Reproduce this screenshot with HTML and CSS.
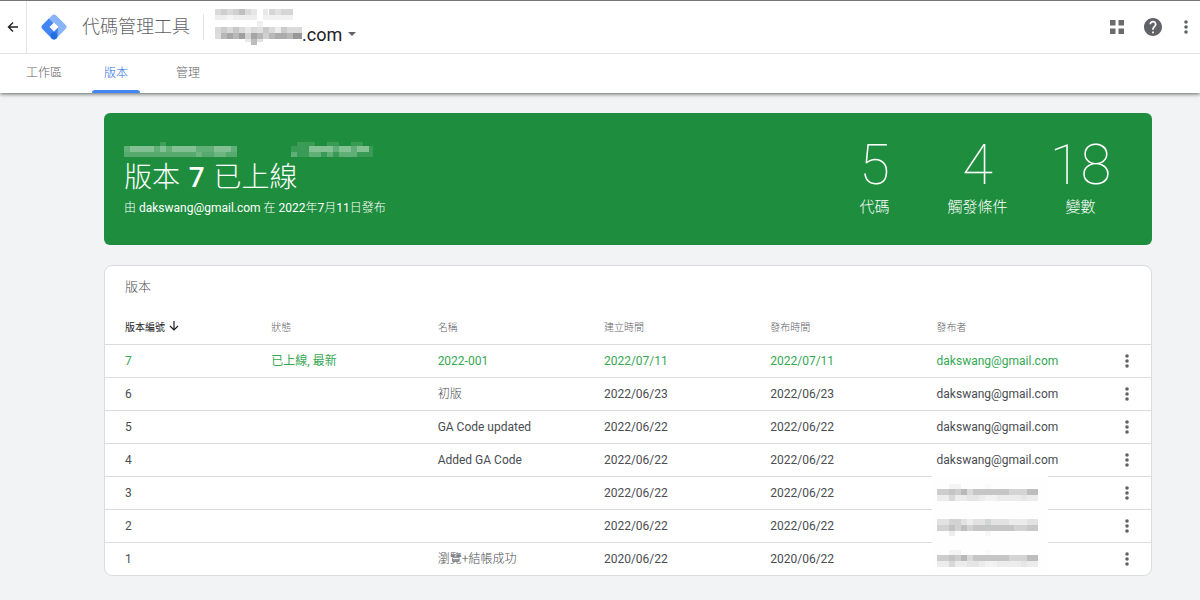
FILE: index.html
```
<!DOCTYPE html>
<html lang="zh-Hant">
<head>
    <meta charset="UTF-8">
    <meta name="viewport" content="width=device-width, initial-scale=1.0">
    <title>代碼管理工具</title>
    <link rel="stylesheet" href="styles.css">
</head>
<body>
    <!-- shared shapes -->
    <svg class="sprite" aria-hidden="true">
        <symbol id="dots" viewBox="0 0 4 14">
            <circle cx="2" cy="2" r="1.8"/><circle cx="2" cy="7" r="1.8"/><circle cx="2" cy="12" r="1.8"/>
        </symbol>
        <symbol id="masked" viewBox="0 0 116 32" overflow="visible">
            <rect x="0" y="-1" width="116" height="35" fill="#fefefe"/>
            <rect x="17" y="7" width="12" height="5" fill="#f4f4f4"/><rect x="53" y="7" width="6" height="5" fill="#fafafa"/>
            <rect x="5" y="12" width="101" height="6" fill="#cdcdcd"/>
            <rect x="17" y="12" width="6" height="6" fill="#c4c4c4"/><rect x="29" y="12" width="6" height="6" fill="#b9b9b9"/>
            <rect x="35" y="12" width="6" height="6" fill="#d9d9d9"/><rect x="41" y="12" width="36" height="6" fill="#c6c6c6"/>
            <rect x="77" y="12" width="18" height="6" fill="#d4d4d4"/><rect x="95" y="12" width="11" height="6" fill="#bdbdbd"/>
            <rect x="5" y="18" width="101" height="6" fill="#ececec"/>
            <rect x="17" y="18" width="6" height="6" fill="#d8d8d8"/><rect x="35" y="18" width="12" height="6" fill="#e5e5e5"/>
            <rect x="53" y="18" width="12" height="6" fill="#f2f2f2"/><rect x="89" y="18" width="6" height="6" fill="#e6e6e6"/>
        </symbol>
        <symbol id="masked-low" viewBox="0 0 116 32" overflow="visible">
            <rect x="0" y="-1" width="116" height="35" fill="#fefefe"/>
            <rect x="5" y="9" width="101" height="6" fill="#e2e2e2"/>
            <rect x="17" y="9" width="12" height="6" fill="#d2d2d2"/><rect x="35" y="9" width="6" height="6" fill="#ededed"/>
            <rect x="53" y="9" width="6" height="6" fill="#d0d6d4"/><rect x="77" y="9" width="18" height="6" fill="#ebebeb"/>
            <rect x="5" y="15" width="101" height="6" fill="#d2d2d2"/>
            <rect x="17" y="15" width="6" height="6" fill="#c2c2c2"/><rect x="29" y="15" width="6" height="6" fill="#bfbfbf"/>
            <rect x="41" y="15" width="41" height="6" fill="#c6c6c6"/><rect x="95" y="15" width="11" height="6" fill="#c8c8c8"/>
            <rect x="17" y="21" width="6" height="5" fill="#ededed"/><rect x="53" y="21" width="6" height="5" fill="#f7f7f7"/>
        </symbol>
    </svg>

    <header class="header">
        <div class="topbar">
            <button class="icon-btn back" aria-label="返回">
                <svg width="12" height="12" viewBox="0 0 12 12" fill="none" stroke="#202124" stroke-width="1.4"><path d="M11 6H2M6 1.500L1.500 6 6 10.500"/></svg>
            </button>
            <svg class="logo" width="26" height="26" viewBox="0 0 26 26" aria-hidden="true">
                <path d="M10.800 1.600a3 3 0 0 1 4.400 0l9.200 9.200a3 3 0 0 1 0 4.400l-9.200 9.200a3 3 0 0 1-4.400 0L17 13 7.500 5z" fill="#8ab4f8"/>
                <path d="M7.800 4.600L17 13.800v3.700l-1.500 6.600a3 3 0 0 1-4.700.3l-9.200-9.200a3 3 0 0 1 0-4.400z" fill="#4285f4"/>
                <path d="M13 8.500l4.500 4.500-4.500 4.500L8.500 13z" fill="#fff"/>
                <circle cx="13" cy="21.700" r="3.500" fill="#246fdb"/>
            </svg>
            <h1 class="product">代碼管理工具</h1>
            <button class="account">
                <svg width="87" height="38" viewBox="0 0 87 38" shape-rendering="crispEdges" aria-hidden="true">
                    <rect x="0" y="1" width="42" height="6" fill="#dadada"/><rect x="6" y="1" width="6" height="6" fill="#cfcfcf"/>
                    <rect x="18" y="1" width="6" height="6" fill="#d0d0d0"/><rect x="24" y="1" width="6" height="6" fill="#bfbfbf"/>
                    <rect x="36" y="1" width="6" height="6" fill="#e6e6e6"/><rect x="48" y="1" width="5" height="6" fill="#e8e8e8"/>
                    <rect x="54" y="1" width="24" height="6" fill="#d6d6d6"/><rect x="60" y="1" width="6" height="6" fill="#e1e1e1"/>
                    <rect x="0" y="7" width="42" height="5" fill="#eee"/><rect x="12" y="7" width="6" height="5" fill="#f5f5f5"/>
                    <rect x="48" y="7" width="30" height="5" fill="#f1f1f1"/><rect x="42" y="13" width="6" height="6" fill="#f0f0f0"/>
                    <rect x="0" y="19" width="87" height="6" fill="#dadada"/><rect x="6" y="19" width="6" height="6" fill="#ccc"/>
                    <rect x="18" y="19" width="6" height="6" fill="#c8c8c8"/><rect x="30" y="19" width="6" height="6" fill="#e8e8e8"/>
                    <rect x="42" y="19" width="6" height="6" fill="#e0e0e0"/><rect x="48" y="19" width="6" height="6" fill="#c9c9c9"/>
                    <rect x="60" y="19" width="6" height="6" fill="#ededed"/><rect x="66" y="19" width="6" height="6" fill="#cbcbcb"/>
                    <rect x="0" y="25" width="87" height="6" fill="#b8b8b8"/><rect x="0" y="25" width="6" height="6" fill="#ddd"/>
                    <rect x="12" y="25" width="6" height="6" fill="#a7a7a7"/><rect x="24" y="25" width="6" height="6" fill="#9f9f9f"/>
                    <rect x="30" y="25" width="6" height="6" fill="#d2d2d2"/><rect x="36" y="25" width="6" height="6" fill="#a5a5a5"/>
                    <rect x="48" y="25" width="6" height="6" fill="#d0d0d0"/><rect x="60" y="25" width="12" height="6" fill="#acacac"/>
                    <rect x="78" y="25" width="9" height="6" fill="#989898"/><rect x="36" y="31" width="6" height="6" fill="#bcbcbc"/>
                    <rect x="30" y="31" width="6" height="3" fill="#e8e8e8"/><rect x="42" y="31" width="6" height="3" fill="#e2e2e2"/>
                </svg>
                <span class="domain">.com</span>
                <svg class="caret" width="8" height="4" viewBox="0 0 8 4" aria-hidden="true"><path d="M0 0h8L4 4z" fill="#5f6368"/></svg>
            </button>
            <div class="actions">
                <button class="icon-btn" aria-label="應用程式">
                    <svg width="14" height="14" viewBox="0 0 14 14" fill="#6b6b6b"><path d="M0 0h5.500v5.500H0zM8.500 0H14v5.500H8.500zM0 8.500h5.500V14H0zM8.500 8.500H14V14H8.500z"/></svg>
                </button>
                <button class="icon-btn" aria-label="說明">
                    <svg width="18" height="18" viewBox="2 2 20 20" fill="#5f6368"><path d="M12 2C6.480 2 2 6.480 2 12s4.480 10 10 10 10-4.480 10-10S17.520 2 12 2zm1 17h-2v-2h2v2zm2.070-7.750l-.9.920C13.450 12.900 13 13.500 13 15h-2v-.5c0-1.100.45-2.100 1.170-2.830l1.240-1.260c.37-.36.59-.86.59-1.410 0-1.100-.9-2-2-2s-2 .9-2 2H8c0-2.210 1.790-4 4-4s4 1.790 4 4c0 .88-.36 1.680-.93 2.250z"/></svg>
                </button>
                <button class="icon-btn" aria-label="更多"><svg width="4" height="14"><use href="#dots"/></svg></button>
            </div>
        </div>
        <nav class="tabs">
            <a href="#workspace">工作區</a>
            <a href="#versions" class="active">版本</a>
            <a href="#admin">管理</a>
        </nav>
    </header>

    <main class="content">
        <section class="live">
            <div class="live-info">
                <svg width="250" height="17" viewBox="0 0 250 17" fill="#fff" shape-rendering="crispEdges" aria-hidden="true">
                    <path d="M0 5h113v6H0zM12 5h18v6H12zM54 5h18v6H54zM90 5h18v6H90z" fill-opacity=".3"/>
                    <path d="M6 5h24v6H6zM36 5h6v6h-6zM48 5h24v6H48zM90 5h17v6H90z" fill-opacity=".22"/>
                    <path d="M0 11h113v5H0zM24 11h12v5H24zM72 11h6v5h-6z" fill-opacity=".25"/>
                    <path d="M36 1h6v4h-6zM72 11h6v5h-6zM90 11h12v5H90z" fill-opacity=".14"/>
                    <path d="M167 5h82v6h-82zM173 1h18v4h-18zM203 1h12v4h-12zM227 1h12v4h-12z" fill-opacity=".12"/>
                    <path d="M185 5h24v6h-24zM215 5h12v6h-12zM233 5h12v6h-12z" fill-opacity=".38"/>
                    <path d="M209 5h6v6h-6zM227 5h6v6h-6zM167 11h6v5h-6zM185 11h12v5h-12zM203 11h6v5h-6zM215 11h18v5h-18z" fill-opacity=".2"/>
                    <path d="M167 11h82v5h-82z" fill-opacity=".12"/>
                </svg>
                <h2>版本 <b>7</b> 已上線</h2>
                <p>由 <b>dakswang@gmail.com</b> 在 <b>2022</b>年<b>7</b>月<b>11</b>日發布</p>
            </div>
            <dl class="stats">
                <div><dd>5</dd><dt>代碼</dt></div>
                <div><dd>4</dd><dt>觸發條件</dt></div>
                <div><dd>18</dd><dt>變數</dt></div>
            </dl>
        </section>

        <section class="versions" id="versions">
            <h3>版本</h3>
            <table>
                <thead>
                    <tr>
                        <th class="sorted">版本編號 <svg width="10" height="10" viewBox="0 0 10 10" fill="none" stroke="#202124" stroke-width="1.2" aria-hidden="true"><path d="M5 0v9M1 5l4 4 4-4"/></svg></th>
                        <th>狀態</th>
                        <th>名稱</th>
                        <th>建立時間</th>
                        <th>發布時間</th>
                        <th>發布者</th>
                        <th class="menu"></th>
                    </tr>
                </thead>
                <tbody>
                    <tr class="current">
                        <td>7</td><td>已上線, 最新</td><td>2022-001</td><td>2022/07/11</td><td>2022/07/11</td><td>dakswang@gmail.com</td>
                        <td class="menu"><button class="icon-btn" aria-label="更多"><svg width="4" height="14"><use href="#dots"/></svg></button></td>
                    </tr>
                    <tr>
                        <td>6</td><td></td><td class="zh">初版</td><td>2022/06/23</td><td>2022/06/23</td><td>dakswang@gmail.com</td>
                        <td class="menu"><button class="icon-btn" aria-label="更多"><svg width="4" height="14"><use href="#dots"/></svg></button></td>
                    </tr>
                    <tr>
                        <td>5</td><td></td><td>GA Code updated</td><td>2022/06/22</td><td>2022/06/22</td><td>dakswang@gmail.com</td>
                        <td class="menu"><button class="icon-btn" aria-label="更多"><svg width="4" height="14"><use href="#dots"/></svg></button></td>
                    </tr>
                    <tr>
                        <td>4</td><td></td><td>Added GA Code</td><td>2022/06/22</td><td>2022/06/22</td><td>dakswang@gmail.com</td>
                        <td class="menu"><button class="icon-btn" aria-label="更多"><svg width="4" height="14"><use href="#dots"/></svg></button></td>
                    </tr>
                    <tr>
                        <td>3</td><td></td><td></td><td>2022/06/22</td><td>2022/06/22</td><td><svg class="masked" width="116" height="32"><use href="#masked"/></svg></td>
                        <td class="menu"><button class="icon-btn" aria-label="更多"><svg width="4" height="14"><use href="#dots"/></svg></button></td>
                    </tr>
                    <tr>
                        <td>2</td><td></td><td></td><td>2022/06/22</td><td>2022/06/22</td><td><svg class="masked" width="116" height="32"><use href="#masked-low"/></svg></td>
                        <td class="menu"><button class="icon-btn" aria-label="更多"><svg width="4" height="14"><use href="#dots"/></svg></button></td>
                    </tr>
                    <tr>
                        <td>1</td><td></td><td class="zh">瀏覽+結帳成功</td><td>2020/06/22</td><td>2020/06/22</td><td><svg class="masked last" width="116" height="32"><use href="#masked"/></svg></td>
                        <td class="menu"><button class="icon-btn" aria-label="更多"><svg width="4" height="14"><use href="#dots"/></svg></button></td>
                    </tr>
                </tbody>
            </table>
        </section>
    </main>
</body>
</html>
```
FILE: styles.css
```
* {
    box-sizing: border-box;
}
body {
    margin: 0;
    font-family: Roboto, "Noto Sans CJK TC", sans-serif;
    font-size: 12px;
    color: #4a4d51;
    background: #f1f3f4;
}
h1, h2, h3, p, dl, dd {
    margin: 0;
    font-weight: 300;
}
button {
    font: inherit;
    color: inherit;
    background: none;
    border: none;
    padding: 0;
    cursor: pointer;
}
.sprite {
    position: absolute;
    width: 0;
    height: 0;
}
.icon-btn {
    display: inline-flex;
    align-items: center;
    justify-content: center;
    fill: #5f6368;
}

/* header */
.header {
    background: #fff;
    border-top: 1px solid #77777b;
    box-shadow: 0 1px 4px rgba(0, 0, 0, 0.6);
}
.topbar {
    display: flex;
    align-items: center;
    height: 53px;
    border-bottom: 1px solid #e4e5e7;
}
.back {
    width: 27px;
    height: 100%;
    border-right: 1px solid #e4e5e7;
}
.logo {
    margin: 0 15px 0 14px;
}
.product {
    font-size: 18px;
    line-height: 26px;
    color: #5f6368;
    padding-right: 13px;
    border-right: 1px solid #e4e5e7;
}
.account {
    display: flex;
    align-items: center;
    margin-left: 11px;
}
.domain {
    font-size: 18px;
    line-height: 20px;
    padding-top: 16px;
    color: #202124;
}
.caret {
    margin: 14px 0 0 6px;
}
.actions {
    display: flex;
    align-items: center;
    gap: 20px;
    margin-left: auto;
    padding-right: 12px;
}
.actions .icon-btn:last-child {
    margin-left: 2px;
}
.tabs {
    display: flex;
    padding-left: 8px;
}
.tabs a {
    position: relative;
    width: 72px;
    line-height: 39px;
    text-align: center;
    text-decoration: none;
    color: #5f6368;
    font-weight: 300;
}
.tabs .active {
    color: #2f6de0;
}
.tabs .active::after {
    content: "";
    position: absolute;
    left: 12px;
    right: 12px;
    bottom: 0;
    height: 3px;
    border-radius: 3px 3px 0 0;
    background: #4285f4;
}

/* live version */
.content {
    padding: 20px 48px 24px 104px;
}
.live {
    display: flex;
    justify-content: space-between;
    align-items: center;
    padding: 24px 20px;
    margin-bottom: 20px;
    border-radius: 6px;
    background: #1e8e3e;
    color: #fff;
}
.live-info {
    display: flex;
    flex-direction: column;
}
.live h2 {
    font-size: 28px;
    line-height: 40px;
}
.live p {
    font-size: 12px;
    line-height: 20px;
}
.live b {
    font-weight: 400;
}
.live h2 b {
    font-weight: 500;
    padding: 0 2px;
}
.stats {
    display: grid;
    grid-template-columns: repeat(3, 103px);
    text-align: center;
}
.stats div {
    display: flex;
    flex-direction: column;
}
.stats dd {
    font-size: 56px;
    font-weight: 100;
    line-height: 56px;
}
.stats dt {
    font-size: 15px;
    line-height: 28px;
}

/* version table */
.versions {
    background: #fff;
    border: 1px solid #dadce0;
    border-radius: 8px;
}
.versions h3 {
    font-size: 13px;
    line-height: 20px;
    padding: 11px 20px;
}
table {
    width: 100%;
    table-layout: fixed;
    border-collapse: separate;
    border-spacing: 0;
}
th, td {
    height: 33px;
    padding: 0;
    text-align: left;
    line-height: 16px;
}
th {
    height: 36px;
    width: 15.9%;
    padding-top: 4px;
    font-size: 10px;
    font-weight: 300;
    color: #5f6368;
}
th:first-child, td:first-child {
    padding-left: 20px;
}
th:nth-child(6) {
    width: auto;
}
th.sorted {
    color: #202124;
    font-weight: 400;
}
th.sorted svg {
    margin-left: 2px;
}
th.menu {
    width: 48px;
}
td {
    border-top: 1px solid #dadce0;
}
td.menu {
    text-align: center;
}
td.zh {
    font-weight: 300;
}
td .icon-btn {
    width: 24px;
    height: 24px;
    vertical-align: middle;
}
.current td {
    color: #34a853;
}
.masked {
    display: block;
    margin-left: -5px;
    overflow: visible;
    shape-rendering: crispEdges;
}
.masked.last {
    overflow: hidden;
}
```
